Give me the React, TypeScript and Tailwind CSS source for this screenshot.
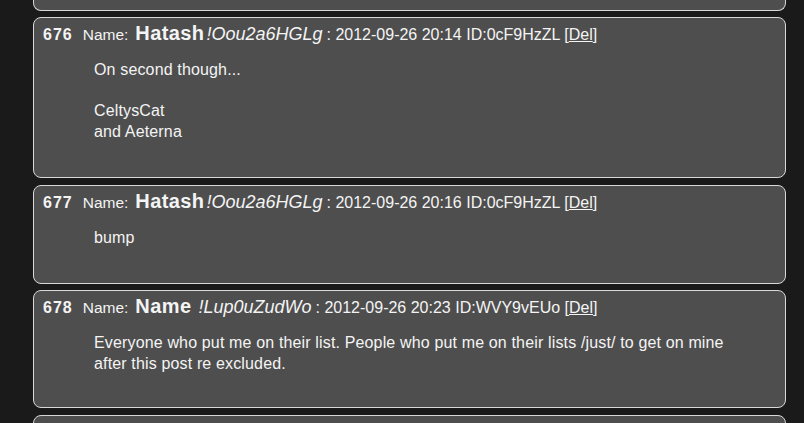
import React from 'react';

type Post = {
  no: number;
  name: string;
  trip: string;
  date: string;
  id: string;
  lines: string[];
  bodyH: string;
};

const posts: Post[] = [
  {
    no: 676,
    name: 'Hatash',
    trip: '!Oou2a6HGLg',
    date: '2012-09-26 20:14',
    id: '0cF9HzZL',
    lines: ['On second though...', '', 'CeltysCat', 'and Aeterna'],
    bodyH: 'h-[133px]',
  },
  {
    no: 677,
    name: 'Hatash',
    trip: '!Oou2a6HGLg',
    date: '2012-09-26 20:16',
    id: '0cF9HzZL',
    lines: ['bump'],
    bodyH: 'h-[71px]',
  },
  {
    no: 678,
    name: 'Name',
    trip: '!Lup0uZudWo',
    date: '2012-09-26 20:23',
    id: 'WVY9vEUo',
    lines: [
      'Everyone who put me on their list. People who put me on their lists /just/ to get on mine',
      'after this post re excluded.',
    ],
    bodyH: 'h-[90px]',
  },
];

const PostCard: React.FC<{ post: Post }> = ({ post }) => (
  <div className="w-[753px] rounded-lg border border-[#d8d8d8] bg-[#4e4e4e] text-[#f4f4f4]">
    <div className="flex items-baseline h-[26px] pt-[5px] pl-[9px] leading-[20px] whitespace-nowrap">
      <span className="text-[16px] font-bold tracking-[1px] mr-[10px]">{post.no}</span>
      <span className="text-[15.5px] mr-[7px]">Name:</span>
      <span className="text-[20px] font-bold tracking-[0.4px]">{post.name}</span>
      <span className={`text-[18px] italic ${post.name === 'Name' ? 'ml-[7px]' : 'ml-[2px]'}`}>{post.trip}</span>
      <span className="text-[16px] ml-[4px]">
        : {post.date} ID:{post.id} [<span className="underline">Del</span>]
      </span>
    </div>
    <div className={`${post.bodyH} pl-[60px] pt-[16px] text-[16px] tracking-[0.15px] leading-[20.5px]`}>
      {post.lines.map((l, i) => (
        <div key={i} className="h-[20.5px] whitespace-nowrap">
          {l}
        </div>
      ))}
    </div>
  </div>
);

export default function App() {
  return (
    <div
      className="h-[423px] w-[804px] overflow-hidden bg-[#1a1a1a] pl-[33px]"
      style={{ fontFamily: '"Liberation Sans", Arial, sans-serif' }}
    >
      <div className="flex flex-col gap-[6.5px]">
        <div className="h-[10.5px] w-[753px] rounded-b-lg border-x border-b border-[#d8d8d8] bg-[#4e4e4e]" />
        {posts.map((p) => (
          <PostCard key={p.no} post={p} />
        ))}
        <div className="h-[40px] w-[753px] rounded-t-lg border border-[#d8d8d8] bg-[#4e4e4e]" />
      </div>
    </div>
  );
}
